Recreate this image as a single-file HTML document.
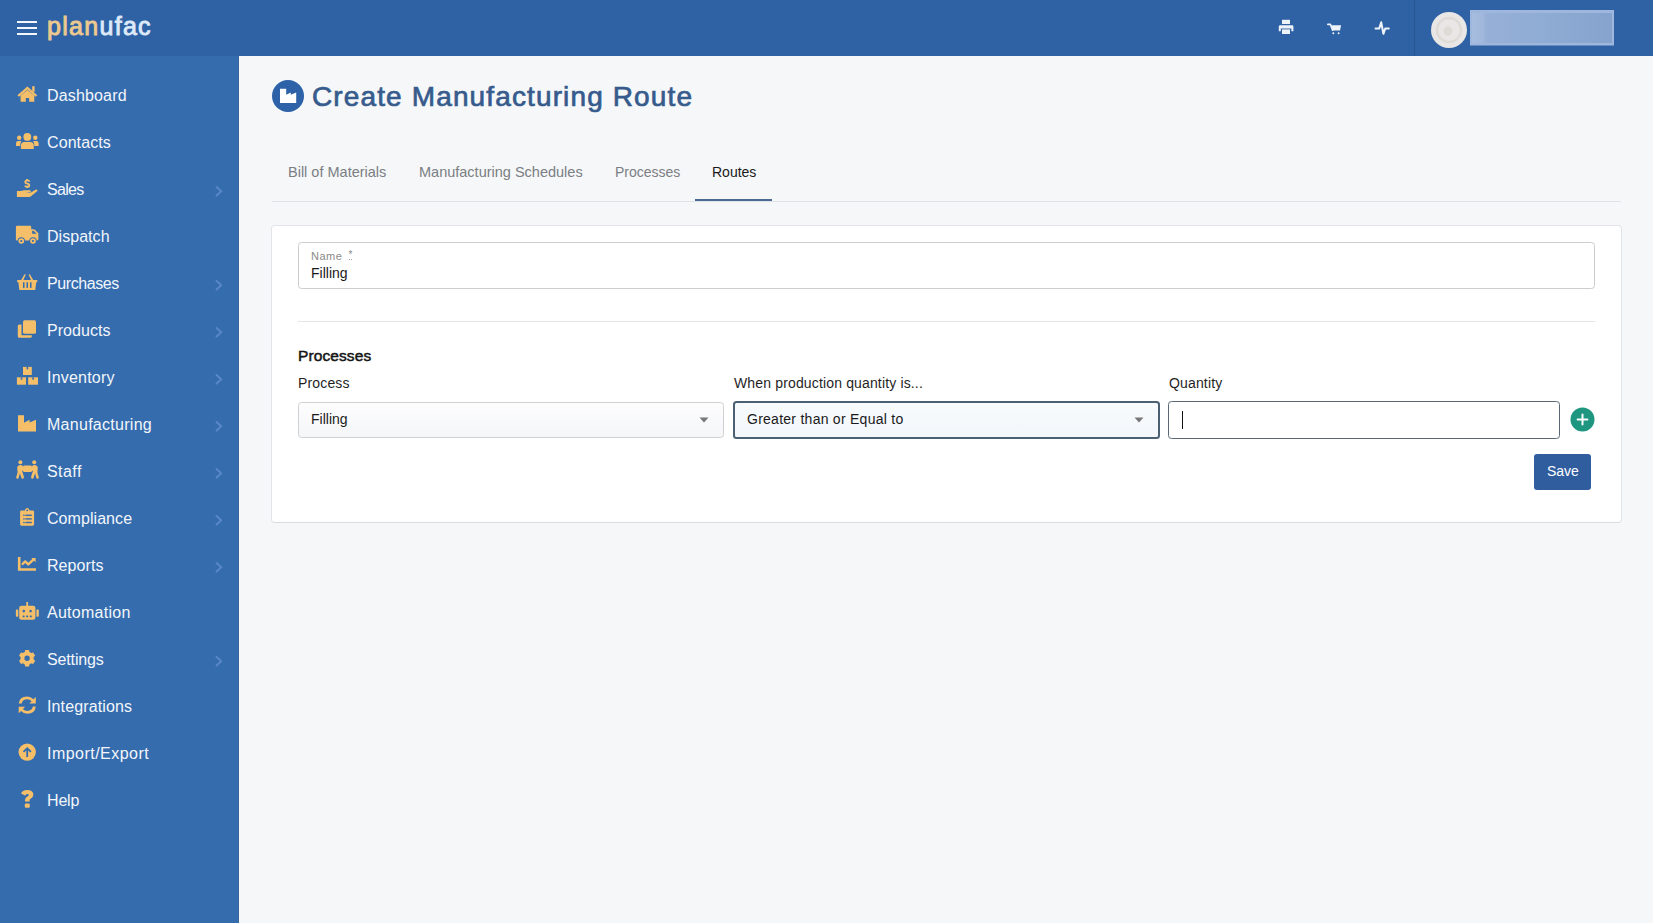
<!DOCTYPE html>
<html><head><meta charset="utf-8">
<style>
*{box-sizing:border-box;margin:0;padding:0}
html,body{width:1653px;height:923px;overflow:hidden;background:#f5f7f9;font-family:"Liberation Sans",sans-serif}
.abs{position:absolute}
.t{position:absolute;white-space:pre;line-height:1}
#hdr{position:absolute;left:0;top:0;width:1653px;height:56px;background:#2f62a5}
#side{position:absolute;left:0;top:56px;width:239px;height:867px;background:#356cae;border-right:1px solid #3b6898}
.lb{left:47px;line-height:47px;font-size:16px;color:#f2f6fb}
.tab{font-size:14.5px;color:#7b7e83;top:164.9px;position:absolute}
.card{position:absolute;left:271px;top:225px;width:1351px;height:298px;background:#fff;border:1px solid #e2e4e7;border-bottom-color:#dadcdf;border-radius:4px}
.inp{position:absolute;border:1px solid #cfd0d2;border-radius:3.5px;background:#fff}
.lbl{font-size:14px;color:#1f1f1f;top:376.1px;letter-spacing:0.15px}
</style></head><body>
<div id="hdr">
  <div class="abs" style="left:17px;top:21px;width:20px;height:2px;background:#f3f7fc"></div>
  <div class="abs" style="left:17px;top:27px;width:20px;height:2px;background:#f3f7fc"></div>
  <div class="abs" style="left:17px;top:33px;width:20px;height:2px;background:#f3f7fc"></div>
  <div class="t" style="left:47px;top:13.8px;font-size:25px;font-weight:400;letter-spacing:1.3px"><span style="color:#ecc98e;-webkit-text-stroke:0.9px #ecc98e">plan</span><span style="color:#dde9f8;-webkit-text-stroke:0.9px #dde9f8">ufac</span></div>
  <!-- right icons -->
  <svg class="abs" style="left:0;top:0" width="1653" height="56" viewBox="0 0 1653 56">
    <g fill="#eef3fa">
      <!-- printer -->
      <rect x="1282" y="19.8" width="8" height="4.2"/>
      <path d="M1278.8 26.6 Q1278.8 25.2 1280.2 25.2 H1291.9 Q1293.4 25.2 1293.4 26.6 V31.2 H1291.4 V28.4 H1280.8 V31.2 H1278.8 Z"/>
      <rect x="1282" y="29.4" width="8" height="4.6"/>
      <!-- cart -->
      <path d="M1327.8 24.4 H1330.4 L1332.6 30.2" fill="none" stroke="#eef3fa" stroke-width="1.6" stroke-linecap="round" stroke-linejoin="round"/>
      <path d="M1331.4 25.2 H1341.1 L1340 30.5 H1332.6 Z"/>
      <circle cx="1333.3" cy="33.2" r="1"/><circle cx="1338.6" cy="33.2" r="1"/>
    </g>
    <path d="M1375.5 28.6 H1379.2 L1381.2 22.2 L1383.4 33.8 L1385.2 28.6 H1388.8" fill="none" stroke="#eef3fa" stroke-width="2" stroke-linejoin="round" stroke-linecap="round"/>
    <rect x="1414" y="0" width="1" height="56" fill="#2a5591"/>
    <circle cx="1449" cy="30" r="18" fill="#e9e7e5"/>
    <circle cx="1449" cy="30" r="12" fill="none" stroke="#dedbd7" stroke-width="2.5"/><circle cx="1448" cy="31" r="4.5" fill="#dedbd7"/>
    <defs><linearGradient id="bl" x1="0" x2="1" y1="0" y2="0"><stop offset="0" stop-color="#a6bddf"/><stop offset="0.08" stop-color="#a0b8dc"/><stop offset="0.1" stop-color="#97b0d7"/><stop offset="0.5" stop-color="#8facd4"/><stop offset="1" stop-color="#86a3ce"/></linearGradient></defs>
    <rect x="1470" y="10" width="144" height="35.5" fill="#9fb7dc"/>
    <rect x="1472" y="13" width="140" height="30" fill="url(#bl)"/>
  </svg>
</div>
<div id="side"></div><div class="abs" style="left:0;top:0"><div class="lb t" style="top:72px;letter-spacing:0.16px">Dashboard</div><div class="lb t" style="top:119px;letter-spacing:0.09px">Contacts</div><div class="lb t" style="top:166px;letter-spacing:-0.68px">Sales</div><div class="lb t" style="top:213px;letter-spacing:0.04px">Dispatch</div><div class="lb t" style="top:260px;letter-spacing:-0.41px">Purchases</div><div class="lb t" style="top:307px;letter-spacing:0.06px">Products</div><div class="lb t" style="top:354px;letter-spacing:0.20px">Inventory</div><div class="lb t" style="top:401px;letter-spacing:0.28px">Manufacturing</div><div class="lb t" style="top:448px;letter-spacing:0.43px">Staff</div><div class="lb t" style="top:495px;letter-spacing:0.06px">Compliance</div><div class="lb t" style="top:542px;letter-spacing:0.07px">Reports</div><div class="lb t" style="top:589px;letter-spacing:0.27px">Automation</div><div class="lb t" style="top:636px;letter-spacing:-0.14px">Settings</div><div class="lb t" style="top:683px;letter-spacing:0.13px">Integrations</div><div class="lb t" style="top:730px;letter-spacing:0.47px">Import/Export</div><div class="lb t" style="top:777px;letter-spacing:-0.17px">Help</div></div>
<svg class="abs" style="left:0;top:0" width="239" height="923" viewBox="0 0 239 923">
<g fill="#f5bf6a">
 <!-- house -->
 <path d="M17.4 95.2 L27.4 86.6 L37.2 95.2 L35.8 96.8 L27.4 89.4 L19 96.8 Z"/>
 <rect x="32.2" y="86.2" width="2.4" height="5.5"/>
 <path d="M20.6 95.6 L27.4 89.9 L34.3 95.6 V101.8 H29.2 V98 H25.8 V101.8 H20.6 Z"/>
 <!-- users -->
 <circle cx="27.3" cy="136.9" r="3.9"/>
 <circle cx="19.2" cy="137.8" r="2.2"/>
 <circle cx="35.3" cy="137.8" r="2.2"/>
 <path d="M20.9 149 V145.5 Q20.9 142 24.4 142 H30.3 Q33.8 142 33.8 145.5 V149 Z"/>
 <path d="M16 146 V143.3 Q16 141.1 18.2 141.1 H21.4 Q20.2 142.6 20.2 146 Z"/>
 <path d="M38.6 146 V143.3 Q38.6 141.1 36.4 141.1 H33.2 Q34.4 142.6 34.4 146 Z"/>
 <!-- hand dollar -->
 <path d="M16.9 191 H21 Q23 190 25.5 190.3 H30 Q31.2 190.6 30.8 191.8 Q30.5 192.6 29.5 192.6 H25.5 L29.8 193 L35.6 189.8 Q37 189.2 37.4 190.3 Q37.6 191 36.8 191.6 L31 196.2 Q30.2 197 29 197 H16.9 Z"/>
 <path d="M27.2 178.9 V180.2 M29.6 181.6 Q29 180.4 27.4 180.4 Q25.3 180.4 25.3 182 Q25.3 183.3 27.3 183.6 Q29.3 183.9 29.3 185.2 Q29.3 186.8 27.2 186.8 Q25.5 186.8 25 185.6 M27.2 186.8 V188" fill="none" stroke="#f5bf6a" stroke-width="1.9"/>
 <!-- truck -->
 <path d="M15.9 227 Q15.9 225.8 17.1 225.8 H30.2 Q31.2 225.8 31.2 227 V229.2 H33.8 Q34.4 229.2 34.9 229.7 L38 232.8 Q38.4 233.3 38.4 233.9 V239 Q38.4 240.4 37 240.4 H16.9 Q15.9 240.4 15.9 239.4 Z"/>
 <!-- basket -->
 <path d="M17.2 280 H37.3 V282.2 H36.2 L35.3 289.9 H19.3 L18.4 282.2 H17.2 Z"/>
 <path d="M21.2 280 L24.4 274.4 Q25.3 273.8 25.8 274.6 L23.4 280 Z"/>
 <path d="M33.2 280 L30 274.4 Q29.1 273.8 28.6 274.6 L31 280 Z"/>
 <!-- clone -->
 <rect x="23" y="320.2" width="13" height="13.6" rx="1.6"/>
 <path d="M17.8 325.9 Q17.8 324.4 19.3 324.4 H21.5 V335.2 H31.8 V336.2 Q31.8 337.7 30.3 337.7 H19.3 Q17.8 337.7 17.8 336.2 Z"/>
 <!-- cubes -->
 <rect x="23" y="366.9" width="8.8" height="8.1"/>
 <rect x="16.9" y="377.3" width="9.1" height="7.4"/>
 <rect x="28.2" y="377.3" width="9.8" height="7.4"/>
 <!-- industry -->
 <path d="M18 415.2 H24 V422.7 L29.6 419.8 V422.6 L36 419.8 V431.4 H18 Z"/>
 <!-- staff -->
 <circle cx="20.4" cy="462.3" r="2"/>
 <circle cx="34.2" cy="462.3" r="2"/>
 <rect x="23.2" y="465.6" width="8.6" height="6.4" rx="1"/>
 <path d="M17.2 467.5 Q17.6 465 20.6 465 Q22 465 23.2 466.4 L24.2 468 V471.6 L21.9 470.6 L23.9 476.8 Q24.3 478.8 22.6 478.8 Q21.6 478.8 21.3 477.6 L19.9 473.3 L18.6 477.9 Q18.3 478.8 17.3 478.8 Q15.8 478.6 16.2 477.2 L17.6 472.6 Z"/>
 <path d="M37.8 467.5 Q37.4 465 34.4 465 Q33 465 31.8 466.4 L30.8 468 V471.6 L33.1 470.6 L31.1 476.8 Q30.7 478.8 32.4 478.8 Q33.4 478.8 33.7 477.6 L35.1 473.3 L36.4 477.9 Q36.7 478.8 37.7 478.8 Q39.2 478.6 38.8 477.2 L37.4 472.6 Z"/>
 <!-- clipboard -->
 <path d="M20.1 511.8 Q20.1 510.4 21.5 510.4 H24.8 Q25.4 508 27.2 508 Q29 508 29.6 510.4 H32.7 Q34.1 510.4 34.1 511.8 V524.3 Q34.1 525.7 32.7 525.7 H21.5 Q20.1 525.7 20.1 524.3 Z"/>
 <!-- chart -->
 <path d="M17.9 557.1 H20.5 V568.3 H36 V570.8 H17.9 Z"/>
 <path d="M22.6 564 L25.2 561.4 L28.3 564.4 L33.9 559.2" fill="none" stroke="#f5bf6a" stroke-width="2.4" stroke-linecap="round" stroke-linejoin="round"/><path d="M31.4 558 H35.6 V562.2 Z"/>
 <!-- robot -->
 <rect x="19.2" y="605.8" width="16.2" height="13.9" rx="2.2"/>
 <rect x="26.3" y="602" width="1.8" height="4"/>
 <rect x="15.9" y="609.6" width="2.4" height="7.2" rx="0.8"/>
 <rect x="36.4" y="609.6" width="2.4" height="7.2" rx="0.8"/>
 <!-- cog -->
 <path fill-rule="evenodd" d="M24.78 652.02 L25.18 650.02 L29.02 650.02 L29.42 652.02 L31.29 653.10 L33.22 652.45 L35.14 655.77 L33.61 657.12 L33.61 659.28 L35.14 660.63 L33.22 663.95 L31.29 663.30 L29.42 664.38 L29.02 666.38 L25.18 666.38 L24.78 664.38 L22.91 663.30 L20.98 663.95 L19.06 660.63 L20.59 659.28 L20.59 657.12 L19.06 655.77 L20.98 652.45 L22.91 653.10 Z M29.8 658.2 A2.7 2.7 0 1 0 24.400000000000002 658.2 A2.7 2.7 0 1 0 29.8 658.2 Z"/>
 <!-- sync -->
 <path d="M18.7 703.6 Q19.4 696.5 27.2 696.5 Q31 696.5 33.4 699.2 L35.8 697 V703.4 H29.4 L31.6 701.2 Q29.9 699.3 27.2 699.3 Q22.6 699.3 21.6 703.6 Z"/>
 <path d="M35.8 706.6 Q35.1 713.7 27.3 713.7 Q23.5 713.7 21.1 711 L18.7 713.2 V706.8 H25.1 L22.9 709 Q24.6 710.9 27.3 710.9 Q31.9 710.9 32.9 706.6 Z"/>
 <!-- arrow circle -->
 <circle cx="27.2" cy="752.1" r="8.7"/>
 <!-- question -->
 <path d="M21.1 793.6 Q22.2 789.9 27 789.9 Q33.4 789.9 33.4 794.6 Q33.4 797.2 31 798.5 Q29.6 799.3 29.6 800.4 V801.6 H25 V800.2 Q25 797.6 27.4 796.5 Q28.8 795.8 28.8 794.9 Q28.8 793.9 27.3 793.9 Q25.9 793.9 25 795.4 Z"/>
 <rect x="24.8" y="803.6" width="5" height="4.2" rx="1.2"/>
</g>
<g fill="#356cae">
 <path d="M32.2 230.8 H33.6 L36.6 233.8 H32.2 Z"/>
 <circle cx="21.3" cy="241" r="3.7"/><circle cx="33" cy="241" r="3.7"/>
 <circle cx="21.3" cy="241" r="2.8" fill="#f5bf6a"/><circle cx="33" cy="241" r="2.8" fill="#f5bf6a"/>
 <circle cx="21.3" cy="241" r="1.1"/><circle cx="33" cy="241" r="1.1"/>
 <rect x="23" y="282.3" width="1.5" height="5.6"/>
 <rect x="26.5" y="282.3" width="1.5" height="5.6"/>
 <rect x="30" y="282.3" width="1.5" height="5.6"/>
 <rect x="26.6" y="366.9" width="1.6" height="2.4"/>
 <rect x="20.7" y="377.3" width="1.6" height="2.4"/>
 <rect x="32.3" y="377.3" width="1.6" height="2.4"/>
 <rect x="23.2" y="514.6" width="1.4" height="1.4"/><rect x="25.4" y="514.6" width="6.4" height="1.4"/>
 <rect x="23.2" y="518.2" width="1.4" height="1.4"/><rect x="25.4" y="518.2" width="6.4" height="1.4"/>
 <rect x="23.2" y="521.8" width="1.4" height="1.4"/><rect x="25.4" y="521.8" width="6.4" height="1.4"/>
 <circle cx="27.2" cy="510.3" r="0.9"/>
 <circle cx="23.8" cy="611.1" r="1.3"/><circle cx="30.6" cy="611.1" r="1.3"/>
 <rect x="22.6" y="615.6" width="2" height="1.6" rx="0.5"/><rect x="26.2" y="615.6" width="2" height="1.6" rx="0.5"/><rect x="29.8" y="615.6" width="2" height="1.6" rx="0.5"/>
 <path d="M27.2 747 L31.6 751.3 L30.3 752.6 L28.1 750.4 V757 H26.3 V750.4 L24.1 752.6 L22.8 751.3 Z"/>
</g>
<path d="M216.6 187.0 L221.2 191.3 L216.6 195.6" fill="none" stroke="#5887c7" stroke-width="2.1" stroke-linecap="round" stroke-linejoin="round"/><path d="M216.6 281.0 L221.2 285.3 L216.6 289.6" fill="none" stroke="#5887c7" stroke-width="2.1" stroke-linecap="round" stroke-linejoin="round"/><path d="M216.6 328.0 L221.2 332.3 L216.6 336.6" fill="none" stroke="#5887c7" stroke-width="2.1" stroke-linecap="round" stroke-linejoin="round"/><path d="M216.6 375.0 L221.2 379.3 L216.6 383.6" fill="none" stroke="#5887c7" stroke-width="2.1" stroke-linecap="round" stroke-linejoin="round"/><path d="M216.6 422.0 L221.2 426.3 L216.6 430.6" fill="none" stroke="#5887c7" stroke-width="2.1" stroke-linecap="round" stroke-linejoin="round"/><path d="M216.6 469.0 L221.2 473.3 L216.6 477.6" fill="none" stroke="#5887c7" stroke-width="2.1" stroke-linecap="round" stroke-linejoin="round"/><path d="M216.6 516.0 L221.2 520.3 L216.6 524.6" fill="none" stroke="#5887c7" stroke-width="2.1" stroke-linecap="round" stroke-linejoin="round"/><path d="M216.6 563.0 L221.2 567.3 L216.6 571.6" fill="none" stroke="#5887c7" stroke-width="2.1" stroke-linecap="round" stroke-linejoin="round"/><path d="M216.6 657.0 L221.2 661.3 L216.6 665.6" fill="none" stroke="#5887c7" stroke-width="2.1" stroke-linecap="round" stroke-linejoin="round"/></svg>
<div id="main">
  <svg class="abs" style="left:272px;top:80px" width="32" height="32" viewBox="0 0 32 32">
    <circle cx="16" cy="16" r="16" fill="#2d62a8"/>
    <path d="M8 8.8 H14.2 V14.8 L18.8 12.4 V14.8 L24.2 12.4 V23 H8 Z" fill="#fff"/>
  </svg>
  <div class="t" style="left:312px;top:82.8px;font-size:28px;font-weight:400;color:#365b8c;letter-spacing:1.13px;-webkit-text-stroke:0.7px #365b8c">Create Manufacturing Route</div>
  <div class="t tab" style="left:288px">Bill of Materials</div>
  <div class="t tab" style="left:419px">Manufacturing Schedules</div>
  <div class="t tab" style="left:615px;font-size:14px;top:165.3px">Processes</div>
  <div class="t tab" style="left:712px;color:#1a1a1a;font-size:14px;top:165.3px">Routes</div>
  <div class="abs" style="left:272px;top:201px;width:1349px;height:1px;background:#dfe2e6"></div>
  <div class="abs" style="left:695px;top:199px;width:77px;height:2px;background:#4a6a92"></div>

  <div class="card"></div>
  <div class="inp" style="left:298px;top:242px;width:1297px;height:47px;border-color:#cdcdcf"></div>
  <div class="t" style="left:311px;top:250.7px;font-size:11px;color:#8a8a8a;letter-spacing:0.5px">Name</div><div class="t" style="left:348.5px;top:249.5px;font-size:10px;color:#8a8a8a;border-bottom:1px dotted #aaa;line-height:9px">*</div>
  <div class="t" style="left:311px;top:266.1px;font-size:14px;color:#1a1a1a">Filling</div>
  <div class="abs" style="left:298px;top:321px;width:1297px;height:1px;background:#e3e5e8"></div>
  <div class="t" style="left:298px;top:347.5px;font-size:15.5px;font-weight:400;color:#151515;letter-spacing:0.1px;-webkit-text-stroke:0.5px #151515">Processes</div>
  <div class="t lbl" style="left:298px">Process</div>
  <div class="t lbl" style="left:734px">When production quantity is...</div>
  <div class="t lbl" style="left:1169px">Quantity</div>

  <div class="inp" style="left:298px;top:402px;width:426px;height:36px;background:linear-gradient(#fdfdfe,#f5f6f8)"></div>
  <div class="t" style="left:311px;top:412.1px;font-size:14px;color:#1a1a1a">Filling</div>
  <svg class="abs" style="left:699px;top:417px" width="10" height="6"><path d="M0.5 0.5 H9.5 L5 5.5 Z" fill="#777"/></svg>

  <div class="inp" style="left:733px;top:401px;width:427px;height:38px;border:2px solid #4b6173;background:linear-gradient(#f7fbfe,#f3f6fa)"></div>
  <div class="t" style="left:747px;top:412.1px;font-size:14px;color:#1a1a1a;letter-spacing:0.26px">Greater than or Equal to</div>
  <svg class="abs" style="left:1134px;top:417px" width="10" height="6"><path d="M0.5 0.5 H9.5 L5 5.5 Z" fill="#777"/></svg>

  <div class="inp" style="left:1168px;top:401px;width:392px;height:38px;border:1.5px solid #5c6774"></div>
  <div class="abs" style="left:1181.5px;top:411px;width:1.4px;height:18px;background:#111"></div>

  <svg class="abs" style="left:1570px;top:407px" width="25" height="25" viewBox="0 0 25 25">
    <circle cx="12.5" cy="12.5" r="12" fill="#1f9680"/>
    <path d="M12.5 7.6 V17.4 M7.6 12.5 H17.4" stroke="#fff" stroke-width="2" stroke-linecap="round"/>
  </svg>

  <div class="abs" style="left:1534px;top:454px;width:57px;height:36px;background:#2f5d9e;border-radius:3px"></div>
  <div class="t" style="left:1547px;top:464.1px;font-size:14px;color:#fff">Save</div>
</div>
</body></html>
